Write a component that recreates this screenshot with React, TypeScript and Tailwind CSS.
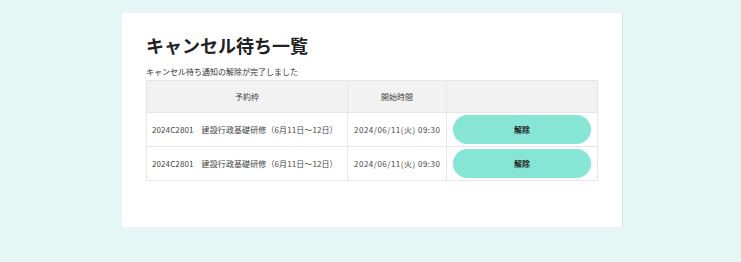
const rows = [
  { slot: '2024C2801　建設行政基礎研修（6月11日～12日）', start: '2024/06/11(火) 09:30' },
  { slot: '2024C2801　建設行政基礎研修（6月11日～12日）', start: '2024/06/11(火) 09:30' },
]

export default function App() {
  return (
    <div
      className="min-h-[262px] w-full bg-[#e4f7f4] pt-[13px] pb-[35px]"
      style={{ fontFamily: '"Noto Sans CJK JP", "Noto Sans", sans-serif' }}
    >
      <div className="ml-[122px] h-[214px] w-[500px] bg-white px-6 pt-[20px] shadow-[1px_0_0_#dedede]">
        <h1 className="text-[18px] leading-[24px] font-bold text-[#222]">キャンセル待ち一覧</h1>
        <p className="mt-[9px] text-[8px] leading-[12px] text-[#333]">キャンセル待ち通知の解除が完了しました</p>
        <table className="mt-[2px] w-[452px] border-collapse text-[8px] text-[#444]">
          <thead>
            <tr className="h-[32px] bg-[#f2f2f2]">
              <th className="w-[201px] border border-[#e6e6e6] font-normal">予約枠</th>
              <th className="w-[99px] border border-[#e6e6e6] font-normal">開始時間</th>
              <th className="border border-[#e6e6e6]"></th>
            </tr>
          </thead>
          <tbody>
            {rows.map((r, i) => (
              <tr key={i} className="h-[34px]">
                <td className="border border-[#e6e6e6] pl-[5px] whitespace-nowrap tracking-[0.1px]">{r.slot}</td>
                <td className="border border-[#e6e6e6] pl-[6px] whitespace-nowrap tracking-[0.5px]">{r.start}</td>
                <td className="border border-[#e6e6e6] px-[6px]">
                  <button className="flex h-[29px] w-full items-center justify-center rounded-full bg-[#86e5d4] text-[8px] font-bold text-[#222]">
                    解除
                  </button>
                </td>
              </tr>
            ))}
          </tbody>
        </table>
      </div>
    </div>
  )
}
